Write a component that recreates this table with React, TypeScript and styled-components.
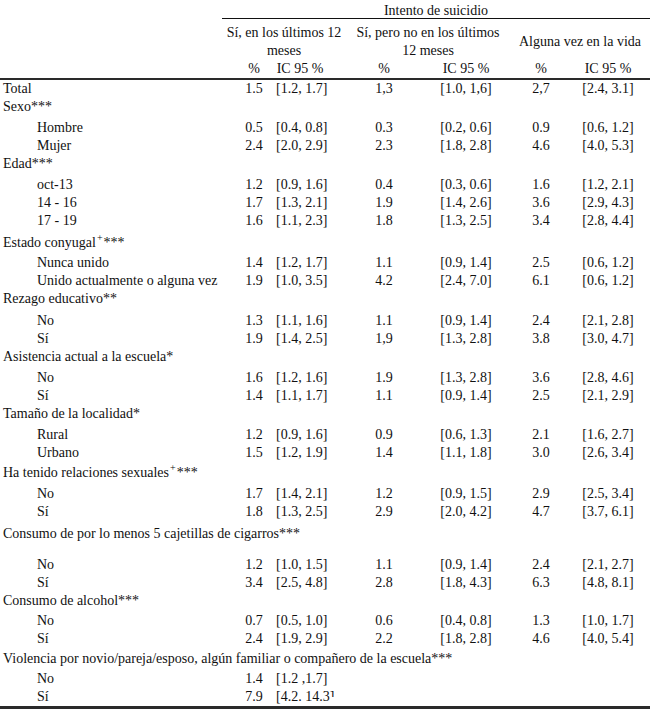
import React from 'react';
import styled, { createGlobalStyle } from 'styled-components';

const GlobalStyle = createGlobalStyle`
    body {
        margin: 0;
        background: #ffffff;
    }
`;

const columns = '222px 54px 70px 76px 88px 62px 78px';

const Table = styled.div`
    width: 650px;
    font-family: 'Liberation Serif', 'Times New Roman', serif;
    font-size: 14px;
    color: #111111;
`;

const HeaderRow = styled.div`
    display: grid;
    grid-template-columns: ${columns};
    height: 19px;
`;

const Blank = styled.div``;

const Caption = styled.div`
    grid-column: 2 / -1;
    text-align: center;
    line-height: 16px;
    padding-top: 3px;
    height: 19px;
    box-sizing: border-box;
    border-bottom: 1px solid #111111;
`;

const GroupRow = styled.div`
    display: grid;
    grid-template-columns: 222px 124px 164px 140px;
    padding-top: 5px;
    line-height: 18px;
`;

const GroupTitle = styled.div`
    display: flex;
    align-items: center;
    justify-content: center;
    text-align: center;
    white-space: nowrap;
`;

const UnitRow = styled.div`
    display: grid;
    grid-template-columns: ${columns};
    height: 18px;
    line-height: 18px;
    border-bottom: 2px solid #2a2a2a;
`;

const Row = styled.div<{ $pt: number; $pb: number; $last: boolean }>`
    display: grid;
    grid-template-columns: ${columns};
    line-height: 18px;
    padding-top: ${(props) => props.$pt}px;
    padding-bottom: ${(props) => props.$pb}px;
    border-bottom: ${(props) =>
        props.$last ? '3px solid #2a2a2a' : 'none'};
`;

const Label = styled.div<{ $indent: boolean }>`
    padding-left: ${(props) => (props.$indent ? '37px' : '3px')};
    white-space: nowrap;
`;

const GroupLabel = styled.div`
    grid-column: 1 / -1;
    padding-left: 3px;
    white-space: nowrap;
`;

const cellPadding = ['0 0 0 10px', '0 22px 0 0', '0', '0', '0', '0 6px 0 0'];

const Cell = styled.div<{ $col: number }>`
    text-align: center;
    white-space: nowrap;
    padding: ${(props) => cellPadding[props.$col]};
`;

const Sup = styled.sup`
    font-size: 10px;
    vertical-align: super;
    line-height: 0;
    margin: 0 1px;
`;

const Clipped = styled.span`
    display: inline-block;
    height: 6px;
    overflow: hidden;
    vertical-align: top;
    margin-top: 3px;
    line-height: 12px;
`;

type RowKind = 'total' | 'group' | 'item';

interface RowData {
    kind: RowKind;
    label: React.ReactNode;
    values?: React.ReactNode[];
    pt?: number;
    pb?: number;
}

const rows: RowData[] = [
    {
        kind: 'total',
        label: 'Total',
        values: ['1.5', '[1.2, 1.7]', '1,3', '[1.0, 1,6]', '2,7', '[2.4, 3.1]'],
    },
    { kind: 'group', label: 'Sexo***', pb: 3 },
    {
        kind: 'item',
        label: 'Hombre',
        values: ['0.5', '[0.4, 0.8]', '0.3', '[0.2, 0.6]', '0.9', '[0.6, 1.2]'],
    },
    {
        kind: 'item',
        label: 'Mujer',
        values: ['2.4', '[2.0, 2.9]', '2.3', '[1.8, 2.8]', '4.6', '[4.0, 5.3]'],
    },
    { kind: 'group', label: 'Edad***', pb: 3 },
    {
        kind: 'item',
        label: 'oct-13',
        values: ['1.2', '[0.9, 1.6]', '0.4', '[0.3, 0.6]', '1.6', '[1.2, 2.1]'],
    },
    {
        kind: 'item',
        label: '14 - 16',
        values: ['1.7', '[1.3, 2.1]', '1.9', '[1.4, 2.6]', '3.6', '[2.9, 4.3]'],
    },
    {
        kind: 'item',
        label: '17 - 19',
        values: ['1.6', '[1.1, 2.3]', '1.8', '[1.3, 2.5]', '3.4', '[2.8, 4.4]'],
    },
    {
        kind: 'group',
        label: (
            <>
                Estado conyugal<Sup>+</Sup>***
            </>
        ),
        pt: 4,
        pb: 2,
    },
    {
        kind: 'item',
        label: 'Nunca unido',
        values: ['1.4', '[1.2, 1.7]', '1.1', '[0.9, 1.4]', '2.5', '[0.6, 1.2]'],
    },
    {
        kind: 'item',
        label: 'Unido actualmente o alguna vez',
        values: ['1.9', '[1.0, 3.5]', '4.2', '[2.4, 7.0]', '6.1', '[0.6, 1.2]'],
    },
    { kind: 'group', label: 'Rezago educativo**', pb: 4 },
    {
        kind: 'item',
        label: 'No',
        values: ['1.3', '[1.1, 1.6]', '1.1', '[0.9, 1.4]', '2.4', '[2.1, 2.8]'],
    },
    {
        kind: 'item',
        label: 'Sí',
        values: ['1.9', '[1.4, 2.5]', '1,9', '[1.3, 2.8]', '3.8', '[3.0, 4.7]'],
    },
    { kind: 'group', label: 'Asistencia actual a la escuela*', pb: 3 },
    {
        kind: 'item',
        label: 'No',
        values: ['1.6', '[1.2, 1.6]', '1.9', '[1.3, 2.8]', '3.6', '[2.8, 4.6]'],
    },
    {
        kind: 'item',
        label: 'Sí',
        values: ['1.4', '[1.1, 1.7]', '1.1', '[0.9, 1.4]', '2.5', '[2.1, 2.9]'],
    },
    { kind: 'group', label: 'Tamaño de la localidad*', pb: 3 },
    {
        kind: 'item',
        label: 'Rural',
        values: ['1.2', '[0.9, 1.6]', '0.9', '[0.6, 1.3]', '2.1', '[1.6, 2.7]'],
    },
    {
        kind: 'item',
        label: 'Urbano',
        values: ['1.5', '[1.2, 1.9]', '1.4', '[1.1, 1.8]', '3.0', '[2.6, 3.4]'],
    },
    {
        kind: 'group',
        label: (
            <>
                Ha tenido relaciones sexuales<Sup>+</Sup>***
            </>
        ),
        pt: 2,
        pb: 3,
    },
    {
        kind: 'item',
        label: 'No',
        values: ['1.7', '[1.4, 2.1]', '1.2', '[0.9, 1.5]', '2.9', '[2.5, 3.4]'],
    },
    {
        kind: 'item',
        label: 'Sí',
        values: ['1.8', '[1.3, 2.5]', '2.9', '[2.0, 4.2]', '4.7', '[3.7, 6.1]'],
    },
    {
        kind: 'group',
        label: 'Consumo de por lo menos 5 cajetillas de cigarros***',
        pt: 4,
        pb: 13,
    },
    {
        kind: 'item',
        label: 'No',
        values: ['1.2', '[1.0, 1.5]', '1.1', '[0.9, 1.4]', '2.4', '[2.1, 2.7]'],
    },
    {
        kind: 'item',
        label: 'Sí',
        values: ['3.4', '[2.5, 4.8]', '2.8', '[1.8, 4.3]', '6.3', '[4.8, 8.1]'],
    },
    { kind: 'group', label: 'Consumo de alcohol***', pb: 2 },
    {
        kind: 'item',
        label: 'No',
        values: ['0.7', '[0.5, 1.0]', '0.6', '[0.4, 0.8]', '1.3', '[1.0, 1.7]'],
    },
    {
        kind: 'item',
        label: 'Sí',
        values: ['2.4', '[1.9, 2.9]', '2.2', '[1.8, 2.8]', '4.6', '[4.0, 5.4]'],
    },
    {
        kind: 'group',
        label: 'Violencia por novio/pareja/esposo, algún familiar o compañero de la escuela***',
        pt: 2,
        pb: 2,
    },
    { kind: 'item', label: 'No', values: ['1.4', '[1.2 ,1.7]'] },
    {
        kind: 'item',
        label: 'Sí',
        values: [
            '7.9',
            <>
                [4.2. 14.3<Clipped>]</Clipped>
            </>,
        ],
    },
];

const units = ['%', 'IC 95 %', '%', 'IC 95 %', '%', 'IC 95 %'];

const App = () => {
    return (
        <>
            <GlobalStyle />
            <Table>
                <HeaderRow>
                    <Blank />
                    <Caption>Intento de suicidio</Caption>
                </HeaderRow>
                <GroupRow>
                    <Blank />
                    <GroupTitle>
                        Sí, en los últimos 12
                        <br />
                        meses
                    </GroupTitle>
                    <GroupTitle>
                        Sí, pero no en los últimos
                        <br />
                        12 meses
                    </GroupTitle>
                    <GroupTitle>Alguna vez en la vida</GroupTitle>
                </GroupRow>
                <UnitRow>
                    <Blank />
                    {units.map((unit, i) => (
                        <Cell key={i} $col={i}>
                            {unit}
                        </Cell>
                    ))}
                </UnitRow>
                {rows.map((row, i) => (
                    <Row
                        key={i}
                        $pt={row.pt ?? 0}
                        $pb={row.pb ?? 0}
                        $last={i === rows.length - 1}
                    >
                        {row.kind === 'group' ? (
                            <GroupLabel>{row.label}</GroupLabel>
                        ) : (
                            <>
                                <Label $indent={row.kind === 'item'}>
                                    {row.label}
                                </Label>
                                {row.values?.map((value, j) => (
                                    <Cell key={j} $col={j}>
                                        {value}
                                    </Cell>
                                ))}
                            </>
                        )}
                    </Row>
                ))}
            </Table>
        </>
    );
};

export default App;
